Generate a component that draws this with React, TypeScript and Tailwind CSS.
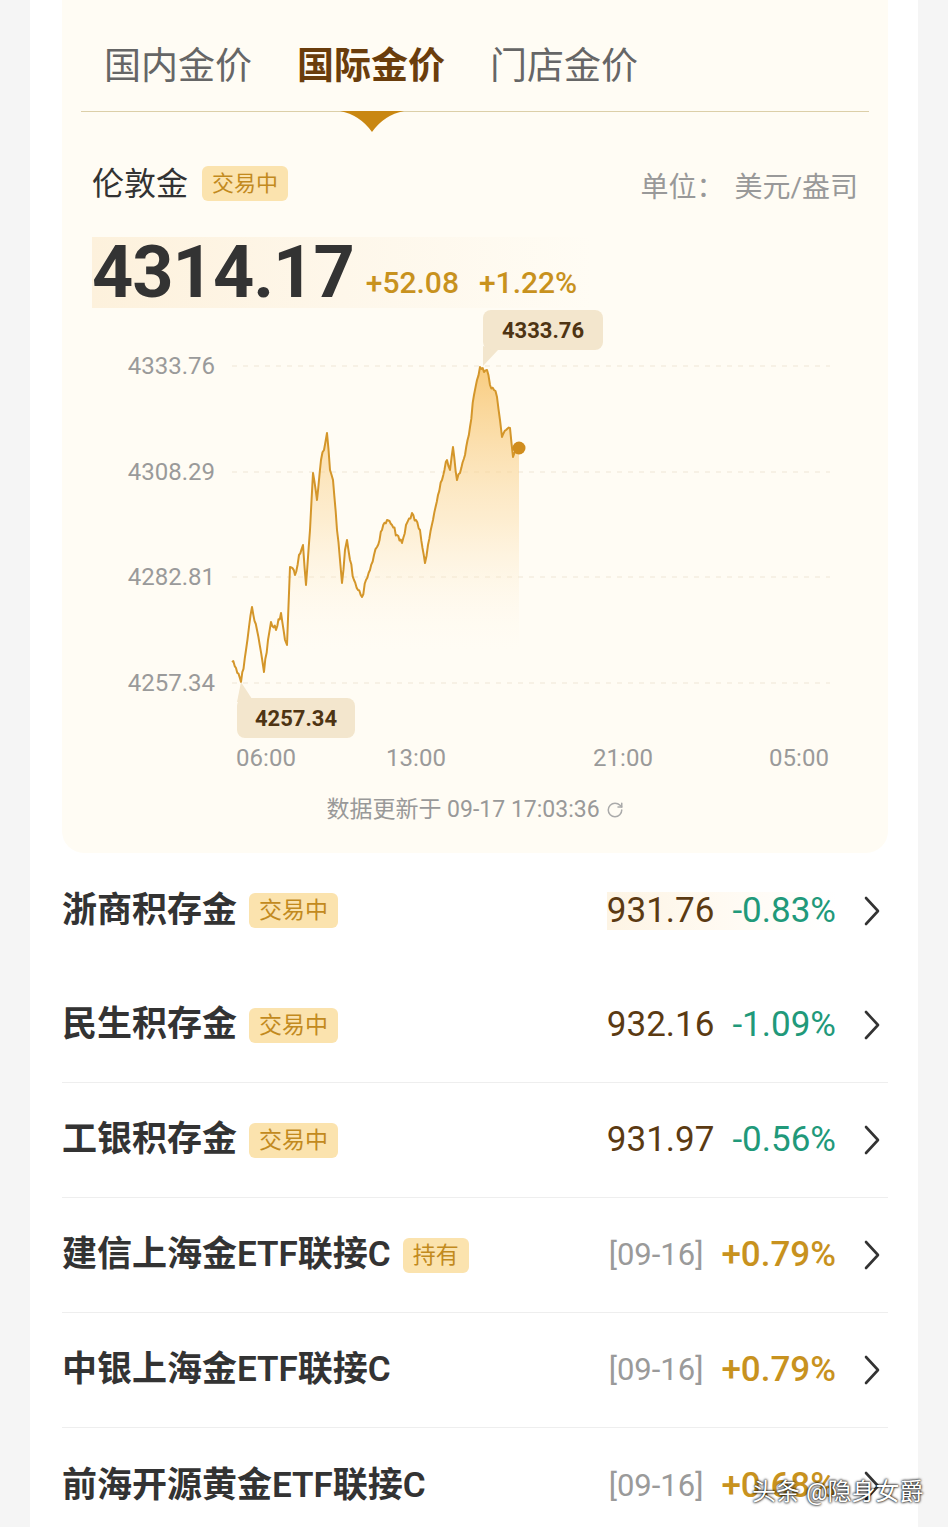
import React from "react";
import { RotateCw } from "lucide-react";

const CN = "font-['Roboto','Noto_Sans_CJK_SC',sans-serif]";

// key points of the price line, in page coordinates
const keyPts: [number, number][] = [
  [232, 662], [236, 668], [241, 682], [246, 650], [252, 607], [257, 630], [264, 672], [268, 640],
  [271, 622], [276, 630], [281, 613], [285, 640], [287, 645], [290, 567], [295, 575], [299, 555],
  [303, 545], [306, 585], [310, 530], [313, 473], [317, 500], [321, 460], [324, 450], [327, 433],
  [330, 470], [333, 480], [337, 530], [340, 560], [342, 583], [345, 550], [347, 540], [350, 560],
  [354, 580], [358, 590], [362, 597], [366, 580], [370, 570], [374, 555], [377, 547], [382, 530],
  [387, 520], [392, 525], [397, 535], [402, 543], [406, 525], [412, 513], [416, 520], [420, 530],
  [425, 563], [428, 545], [433, 520], [438, 495], [442, 480], [447, 460], [450, 470], [453, 447],
  [457, 480], [460, 473], [465, 455], [470, 427], [474, 395], [477, 380], [480, 367], [484, 372],
  [487, 370], [490, 385], [494, 390], [497, 397], [500, 420], [502, 437], [506, 430], [510, 428],
  [513, 457], [516, 452], [519, 448],
];

function seeded(seed: number) {
  let s = seed;
  return () => {
    s = (s * 16807) % 2147483647;
    return (s - 1) / 2147483646;
  };
}

const OX = 92;
const OY = 310;
const BOTTOM = 373;

function buildLine() {
  const r = seeded(42);
  const out: [number, number][] = [];
  for (let k = 0; k < keyPts.length - 1; k++) {
    const [x1, y1] = keyPts[k];
    const [x2, y2] = keyPts[k + 1];
    const steps = Math.max(1, Math.round((x2 - x1) / 1.4));
    for (let i = 0; i < steps; i++) {
      const t = i / steps;
      const j = i === 0 ? 0 : (r() - 0.5) * 6;
      out.push([x1 + (x2 - x1) * t - OX, y1 + (y2 - y1) * t + j - OY]);
    }
  }
  const last = keyPts[keyPts.length - 1];
  out.push([last[0] - OX, last[1] - OY]);
  return out;
}

const line = buildLine();
const lineD = line.map(([x, y], i) => `${i ? "L" : "M"}${x.toFixed(1)} ${y.toFixed(1)}`).join(" ");
const fillD = `${lineD} L${line[line.length - 1][0]} ${BOTTOM} L${line[0][0]} ${BOTTOM} Z`;

const grid = [
  { y: 56, label: "4333.76" },
  { y: 162, label: "4308.29" },
  { y: 267, label: "4282.81" },
  { y: 373, label: "4257.34" },
];

const times = [
  { x: 174, t: "06:00" },
  { x: 324, t: "13:00" },
  { x: 531, t: "21:00" },
  { x: 707, t: "05:00" },
];

function Chart() {
  return (
    <svg width="766" height="465" viewBox="0 0 766 465" className="block">
      <defs>
        <linearGradient id="goldFill" x1="0" y1="56" x2="0" y2="340" gradientUnits="userSpaceOnUse">
          <stop offset="0" stopColor="#f7c062" stopOpacity="0.8" />
          <stop offset="0.55" stopColor="#fbdca6" stopOpacity="0.45" />
          <stop offset="1" stopColor="#fff6e6" stopOpacity="0" />
        </linearGradient>
      </defs>
      {grid.map((g) => (
        <g key={g.label}>
          <line x1="140" x2="738" y1={g.y} y2={g.y} stroke="#efe6d6" strokeWidth="1.2" strokeDasharray="5 6" />
          <text x="123" y={g.y + 8} textAnchor="end" fontSize="24" fill="#9a9a9a" fontFamily="Roboto, sans-serif">
            {g.label}
          </text>
        </g>
      ))}
      <path d={fillD} fill="url(#goldFill)" />
      <path d={lineD} fill="none" stroke="#d4962a" strokeWidth="2" strokeLinejoin="round" />
      <circle cx="427" cy="138" r="6.5" fill="#d08d1e" />

      {/* high tooltip */}
      <path d="M391 36 L391 56 L406 40 Z" fill="#f3e6cd" />
      <rect x="391" y="0" width="120" height="40" rx="8" fill="#f3e6cd" />
      <text x="451" y="28" textAnchor="middle" fontSize="22" fontWeight="700" fill="#4e3413" fontFamily="Roboto, sans-serif">
        4333.76
      </text>

      {/* low tooltip */}
      <path d="M149 372 L145 392 L162 392 Z" fill="#f3e6cd" />
      <rect x="145" y="388" width="118" height="40" rx="8" fill="#f3e6cd" />
      <text x="204" y="416" textAnchor="middle" fontSize="22" fontWeight="700" fill="#4e3413" fontFamily="Roboto, sans-serif">
        4257.34
      </text>

      {times.map((t) => (
        <text key={t.t} x={t.x} y="456" textAnchor="middle" fontSize="24" fill="#9a9a9a" fontFamily="Roboto, sans-serif">
          {t.t}
        </text>
      ))}
    </svg>
  );
}

function Chevron() {
  return (
    <svg width="16" height="30" viewBox="0 0 16 30" className="shrink-0">
      <polyline points="2,2 14,15 2,28" fill="none" stroke="#333" strokeWidth="2.6" strokeLinecap="round" strokeLinejoin="round" />
    </svg>
  );
}

type Row = {
  name: string;
  tag?: string;
  price?: string;
  date?: string;
  pct: string;
  up: boolean;
  glow?: boolean;
};

const rows: Row[] = [
  { name: "浙商积存金", tag: "交易中", price: "931.76", pct: "-0.83%", up: false, glow: true },
  { name: "民生积存金", tag: "交易中", price: "932.16", pct: "-1.09%", up: false },
  { name: "工银积存金", tag: "交易中", price: "931.97", pct: "-0.56%", up: false },
  { name: "建信上海金ETF联接C", tag: "持有", date: "[09-16]", pct: "+0.79%", up: true },
  { name: "中银上海金ETF联接C", date: "[09-16]", pct: "+0.79%", up: true },
  { name: "前海开源黄金ETF联接C", date: "[09-16]", pct: "+0.68%", up: true },
];

export default function App() {
  return (
    <div className={`relative min-h-screen bg-[#f5f5f5] flex justify-center ${CN}`}>
      <div className="w-[888px] bg-white pl-[32px] pr-[30px]">
        {/* price card */}
        <div className="rounded-b-[22px] bg-[#fffcf4] pb-[30px]">
          <div className="relative mx-[19px] border-b border-[#dccfa8]">
            <div className="flex gap-[45px] pl-[23px] pt-[42px] pb-[20px] text-[37px] leading-[49px]">
              <span className="text-[#666]">国内金价</span>
              <span className="font-bold text-[#6a3d0c]">国际金价</span>
              <span className="text-[#666]">门店金价</span>
            </div>
            <svg width="64" height="22" viewBox="0 0 64 22" className="absolute left-[259px] top-full">
              <path d="M0 0 L64 0 Q44 4 32 21 Q20 4 0 0 Z" fill="#c98712" />
            </svg>
          </div>

          <div className="px-[30px]">
            <div className="mt-[49px] flex items-center justify-between">
              <div className="flex items-center">
                <span className="text-[32px] leading-[40px] text-[#333]">伦敦金</span>
                <span className="ml-[14px] rounded-[6px] bg-[#fbe3ae] px-[10px] text-[22px] leading-[35px] text-[#c28a1e]">
                  交易中
                </span>
              </div>
              <span className="mt-[9px] flex text-[28px] leading-[36px] text-[#999]">
                <span>单位：</span>
                <span className="ml-[10px]">美元/盎司</span>
              </span>
            </div>

            <div className="mt-[31px] flex h-[71px] w-[500px] items-end bg-gradient-to-r from-[#fdf1dc] via-[#fef7ea] to-transparent">
              <span className="text-[72px] font-bold leading-[71px] tracking-[-1px] text-[#333]">4314.17</span>
              <span className="mb-[8px] ml-[12px] text-[30px] font-medium leading-[34px] text-[#c8921e]">+52.08</span>
              <span className="mb-[8px] ml-[20px] text-[30px] font-medium leading-[34px] text-[#c8921e]">+1.22%</span>
            </div>

            <div className="mt-[2px]">
              <Chart />
            </div>

            <div className="mt-[22px] flex items-center justify-center gap-[6px] text-[23px] leading-[26px] text-[#999]">
              <span>数据更新于 09-17 17:03:36</span>
              <RotateCw size={18} strokeWidth={2} color="#aaa" />
            </div>
          </div>
        </div>

        {/* list */}
        {rows.map((r, i) => (
          <div
            key={r.name}
            className={`flex h-[115px] items-center ${i >= 1 && i <= 4 ? "border-b border-[#eeeeee]" : ""}`}
          >
            <span className="text-[35px] font-semibold leading-[44px] text-[#333]">{r.name}</span>
            {r.tag && (
              <span className="ml-[12px] rounded-[6px] bg-[#fbe3ae] px-[10px] text-[23px] leading-[35px] text-[#c28a1e]">
                {r.tag}
              </span>
            )}
            <div className="ml-auto flex items-center">
              <div
                className={`flex items-center gap-[18px] text-[35px] leading-[38px] ${
                  r.glow ? "bg-gradient-to-r from-[#fdf4e4] via-[#fffaf2] to-transparent" : ""
                }`}
              >
                {r.price && <span className="text-[#5b3a12]">{r.price}</span>}
                {r.date && <span className="text-[31px] text-[#9a9a9a]">{r.date}</span>}
                <span className={r.up ? "font-medium text-[#c8921e]" : "text-[#21997a]"}>{r.pct}</span>
              </div>
              <div className="ml-[28px] mr-[8px]">
                <Chevron />
              </div>
            </div>
          </div>
        ))}
      </div>

      {/* watermark */}
      <div className="absolute left-[752px] top-[1476px] text-[24px] leading-[32px] text-white [text-shadow:0_0_2px_#000,0_0_3px_#000]">
        头条 @隐身女爵
      </div>
    </div>
  );
}
